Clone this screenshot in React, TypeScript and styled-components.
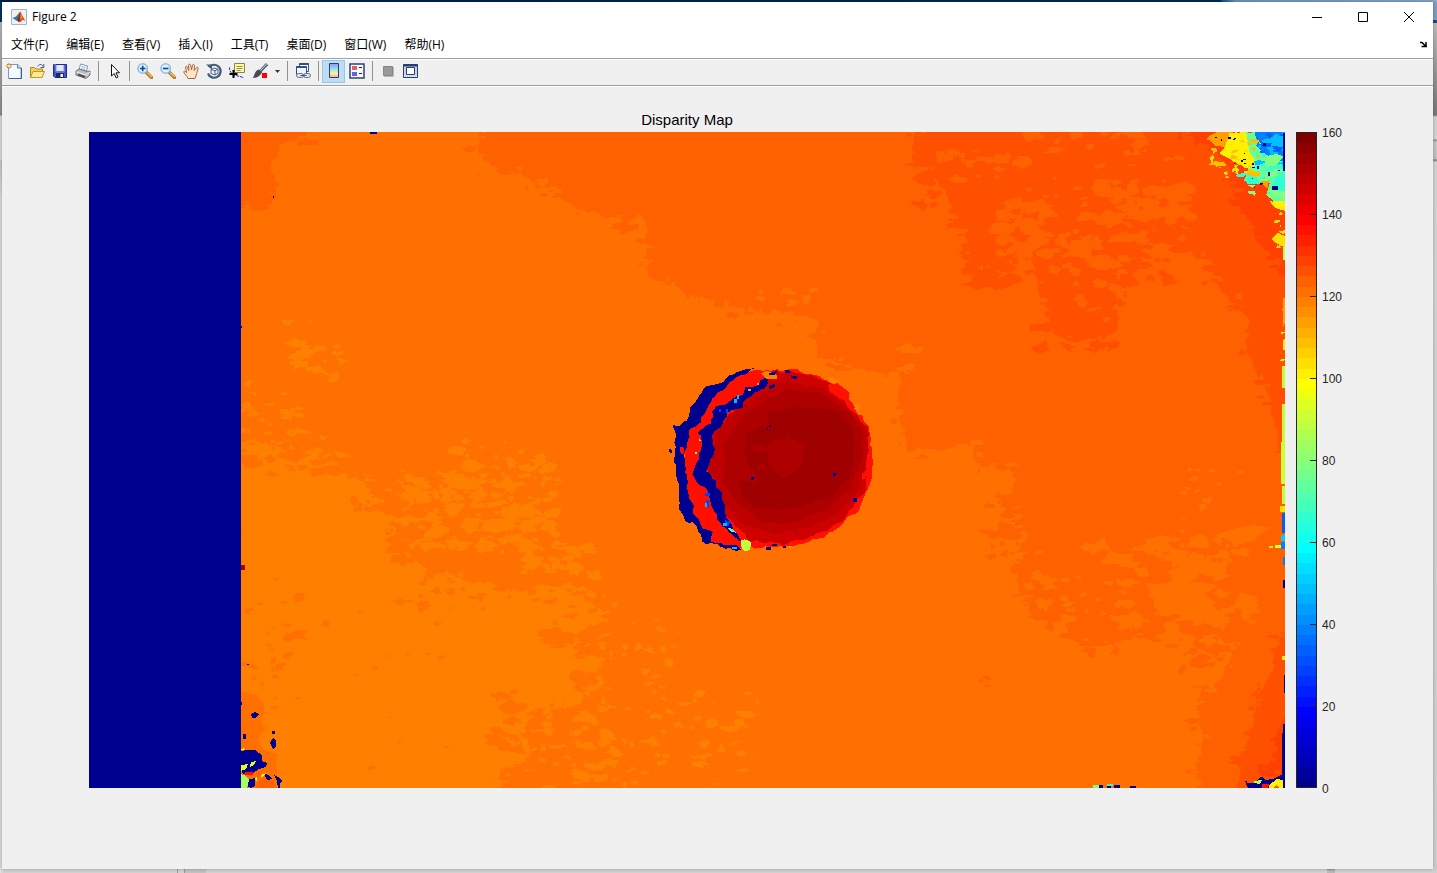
import React from "react";
import styled, { createGlobalStyle } from "styled-components";

const GlobalStyle = createGlobalStyle`
  * { box-sizing: border-box; }
  body { margin: 0; font-family: "Open Sans", "Noto Sans CJK SC", sans-serif; font-size: 12px; color: #000; }
  button { font: inherit; color: inherit; border: 0; background: none; padding: 0; }
`;

const Desktop = styled.div`
  min-height: 100vh;
  display: flex;
  padding: 2px 4px 4px 2px;
  background:
    linear-gradient(#9a9a9a, #9a9a9a) 177px 100% / 1px 4px no-repeat,
    linear-gradient(#9a9a9a, #9a9a9a) 184px 100% / 1px 4px no-repeat,
    linear-gradient(#c4c4c4, #c4c4c4) 184px 100% / 22px 4px no-repeat,
    linear-gradient(#999, #bbb 2px, #bbb 7px, #777 8px) 1327px 100% / 8px 4px no-repeat,
    linear-gradient(90deg, #00203f, #012a55 85%, #0d4f94 85%, #7096bf 86%, #86a6c9) 0 0 / 100% 2px no-repeat,
    linear-gradient(#00355f 0 22px, #b8b8b8 22px, #8f8f8f 114px, #777 115px, #dcdcdc 116px, #dcdcdc 160px, #c8c8c8 161px, #dedede 200px, #dedede) 0 0 / 2px 100% no-repeat,
    linear-gradient(#7d9fc4 0 20px, #0f4c8a 20px 23px, #bdbdbd 23px, #777 115px, #d4d4d4 117px, #d4d4d4 139px, #888 140px, #c8c8c8 142px, #c0c0c0 159px, #778 160px, #d6d6d6 162px, #d0d0d0) 100% 0 / 4px 100% no-repeat,
    #d4d4d4;
`;

const FigureWindow = styled.div`
  flex: 1;
  min-width: 0;
  display: flex;
  flex-direction: column;
  background: #f0f0f0;
  box-shadow: 0 0 4px rgba(0, 0, 0, 0.3);
`;

const TitleBar = styled.header`
  display: flex;
  align-items: center;
  height: 29px;
  padding: 0 1px 0 9px;
  background: #fff;
`;

const WindowTitle = styled.h1`
  flex: 1;
  margin: 0 0 0 5px;
  font-size: 12px;
  font-weight: 400;
  line-height: 16px;
`;

const CaptionButton = styled.button`
  width: 46px;
  height: 28px;
  display: grid;
  place-items: center;
`;

const MenuBar = styled.nav`
  display: flex;
  align-items: center;
  gap: 2px;
  height: 27px;
  padding: 0 6px 0 1px;
  background: #fff;
`;

const MenuButton = styled.button`
  padding: 0 8px;
  line-height: 20px;
  white-space: nowrap;
`;

const DockButton = styled.button`
  display: flex;
  margin-left: auto;
`;

const Toolbar = styled.div`
  display: flex;
  align-items: center;
  height: 29px;
  padding-bottom: 3px;
  border-top: 1px solid #a0a0a0;
  border-bottom: 1px solid #fff;
  box-shadow: inset 0 1px #fff, inset 0 -1px #a0a0a0;
`;

const ToolButton = styled.button<{ $active?: boolean; $narrow?: boolean }>`
  width: ${(p) => (p.$narrow ? 12 : 23)}px;
  height: 23px;
  display: grid;
  place-items: center;
  ${(p) => p.$active && "background: #c0dcf3; box-shadow: inset 0 0 0 1px #90c8f6;"}
`;

const Divider = styled.span`
  width: 1px;
  height: 20px;
  margin: 0 3px 0 4px;
  background: #919191;
`;

const Figure = styled.main`
  flex: 1;
  display: flex;
  align-items: flex-start;
  gap: 11px;
  padding: 23px 91px 81px 87px;
`;

const Axes = styled.figure`
  flex: 1;
  min-width: 0;
  margin: 0;
`;

const AxesTitle = styled.figcaption`
  height: 22px;
  font-family: "Liberation Sans", Arial, sans-serif;
  font-size: 15px;
  line-height: 20px;
  text-align: center;
`;

const MapImage = styled.svg`
  display: block;
  width: 100%;
  height: auto;
`;

const Scale = styled.div`
  align-self: stretch;
  display: flex;
  gap: 5px;
  margin-top: 22px;
`;

const ScaleFrame = styled.div`
  position: relative;
  width: 21px;
`;

const ScaleStrip = styled.svg`
  position: absolute;
  inset: 0;
  width: 100%;
  height: 100%;
`;

const ScaleLabels = styled.div`
  display: flex;
  flex-direction: column;
  justify-content: space-between;
  width: 20px;
  margin: -6px 0 -8px;
  font-family: "Liberation Sans", Arial, sans-serif;
  font-size: 12px;
  line-height: 14px;
  color: #262626;
`;

/* ---------- disparity map drawing ---------- */

type Pt = [number, number];

const random = (seed: number) => () => {
  seed = (seed + 0x6d2b79f5) | 0;
  let t = Math.imul(seed ^ (seed >>> 15), 1 | seed);
  t = (t + Math.imul(t ^ (t >>> 7), 61 | t)) ^ t;
  return ((t ^ (t >>> 14)) >>> 0) / 4294967296;
};

const toPath = (pts: Pt[]) => "M" + pts.map((p) => p.join(" ")).join("L") + "Z";

/* Splits every edge into short pieces and shakes them, for a ragged outline.
   Part of each shift carries over to the next point, which makes lobes and bays. */
function ragged(points: Pt[], amp: number, step: number, seed: number) {
  const r = random(seed);
  const out: Pt[] = [];
  let dx = 0;
  let dy = 0;
  points.forEach(([x, y], i) => {
    const [nx, ny] = points[(i + 1) % points.length];
    const n = Math.max(1, Math.round(Math.hypot(nx - x, ny - y) / step));
    for (let k = 0; k < n; k++) {
      dx = dx * 0.55 + (r() - 0.5) * 2 * amp;
      dy = dy * 0.55 + (r() - 0.5) * 2 * amp;
      out.push([Math.round(x + ((nx - x) * k) / n + dx), Math.round(y + ((ny - y) * k) / n + dy)]);
    }
  });
  return toPath(out);
}

function island(cx: number, cy: number, s: number, r: () => number) {
  const stretch = 1 + r() * 1.5;
  const pts: Pt[] = [];
  for (let a = 0; a < 10; a++) {
    const q = s * (0.35 + r() * 0.9);
    pts.push([
      Math.round((cx + Math.cos((a * Math.PI) / 5) * q * stretch) * 2) / 2,
      Math.round((cy + Math.sin((a * Math.PI) / 5) * q) * 2) / 2,
    ]);
  }
  return toPath(pts);
}

/* Small irregular islands inside a rectangle. */
function islands(x0: number, y0: number, x1: number, y1: number, count: number, size: number, seed: number) {
  const r = random(seed);
  let d = "";
  for (let i = 0; i < count; i++) {
    const cx = x0 + r() * (x1 - x0);
    const cy = y0 + r() * (y1 - y0);
    d += island(cx, cy, size * (0.3 + r() * r()), r);
  }
  return d;
}

/* Islands scattered along an outline, on both of its sides. */
function fringe(points: Pt[], spread: number, step: number, size: number, seed: number) {
  const r = random(seed);
  let d = "";
  points.forEach(([x, y], i) => {
    const [nx, ny] = points[(i + 1) % points.length];
    const n = Math.round(Math.hypot(nx - x, ny - y) / step);
    for (let k = 0; k < n; k++) {
      const t = r();
      const cx = x + (nx - x) * t + (r() - 0.5) * 2 * spread;
      const cy = y + (ny - y) * t + (r() - 0.5) * 2 * spread;
      d += island(cx, cy, size * (0.3 + r() * r()), r);
    }
  });
  return d;
}

const parse = (s: string): Pt[] => s.split(" ").map((p) => p.split(",").map(Number) as Pt);

/* fill, surrounding fill, outline */
const regions: [string, string, string][] = [
  ["#ff8000", "#ff7000", "230,434 273,441 309,439 326,452 347,454 338,468 362,480 384,500 384,519 394,540 394,556 420,562 430,572 467,580 507,592 545,584 586,588 608,596 612,632 602,662 606,705 574,705 538,710 527,727 530,762 503,770 499,800 230,800"],
  ["#ff6000", "#ff7000", "230,110 310,110 308,135 281,146 272,159 275,176 272,205 241,208 230,208"],
  ["#ff6000", "#ff7000", "479,110 480,157 510,172 545,185 562,198 580,208 600,216 625,222 641,216 645,225 648,275 680,290 710,303 740,310 775,317 815,318 818,330 815,358 840,363 873,371 900,376 900,423 907,452 943,450 973,441 977,463 1013,471 1015,489 1000,501 1021,515 1027,536 1013,555 1017,590 1040,627 1067,640 1100,649 1130,638 1167,640 1218,636 1233,653 1220,679 1200,688 1197,701 1202,744 1195,766 1195,800 1310,800 1310,110"],
  ["#ff5000", "#ff6000", "917,110 913,159 930,168 947,198 963,228 973,262 1003,270 1013,254 1033,254 1040,298 1053,332 1073,345 1117,332 1120,285 1150,263 1177,250 1210,263 1223,293 1247,319 1247,354 1263,380 1270,406 1277,432 1283,467 1310,467 1310,110"],
  ["#ff5000", "#ff6000", "1282,632 1273,671 1254,705 1252,736 1236,757 1240,776 1228,810 1310,810 1310,632"],
  ["#ff4000", "#ff5000", "1173,110 1180,137 1208,145 1230,170 1231,190 1253,228 1258,240 1270,255 1283,275 1310,280 1310,110"],
  ["#ff4000", "#ff5000", "1282,720 1276,745 1268,765 1256,773 1272,778 1310,770 1310,720"],
];

const specks: [string, number, number, number, number, number, number][] = [
  ["#ff8000", 365, 478, 560, 550, 90, 8],
  ["#ff8000", 400, 470, 560, 555, 90, 5],
  ["#ff8000", 455, 440, 550, 490, 26, 7],
  ["#ff8000", 280, 320, 310, 326, 3, 4],
  ["#ff8000", 293, 340, 345, 382, 20, 6],
  ["#ff8000", 241, 380, 300, 435, 22, 6],
  ["#ff8000", 520, 545, 595, 575, 30, 6],
  ["#ff8000", 620, 620, 680, 700, 18, 5],
  ["#ff8000", 620, 690, 760, 785, 48, 5],
  ["#ff8000", 540, 715, 615, 785, 52, 7],
  ["#ff7000", 241, 440, 360, 475, 60, 7],
  ["#ff7000", 345, 465, 400, 510, 30, 8],
  ["#ff7000", 390, 530, 475, 562, 34, 7],
  ["#ff7000", 400, 565, 560, 610, 34, 5],
  ["#ff7000", 545, 590, 612, 660, 40, 7],
  ["#ff7000", 580, 660, 608, 710, 22, 8],
  ["#ff7000", 495, 690, 560, 785, 36, 7],
  ["#ff7000", 241, 570, 300, 730, 26, 6],
  ["#ff7000", 300, 600, 480, 780, 14, 4],
  ["#ff6000", 470, 138, 570, 180, 18, 5],
  ["#ff6000", 820, 328, 905, 373, 26, 5],
  ["#ff7000", 730, 290, 815, 325, 18, 7],
  ["#ff7000", 890, 340, 918, 390, 10, 6],
  ["#ff6000", 990, 495, 1025, 580, 20, 7],
  ["#ff7000", 1030, 545, 1150, 630, 42, 8],
  ["#ff7000", 1150, 535, 1245, 562, 22, 9],
  ["#ff7000", 1180, 470, 1245, 545, 14, 6],
  ["#ff7000", 1165, 555, 1222, 645, 44, 11],
  ["#ff7000", 1220, 600, 1255, 628, 12, 9],
  ["#ff6000", 1180, 635, 1230, 680, 18, 6],
  ["#ff5000", 915, 155, 970, 205, 26, 7],
  ["#ff5000", 965, 230, 1010, 285, 30, 8],
  ["#ff6000", 930, 150, 1010, 180, 20, 6],
  ["#ff6000", 1000, 130, 1180, 220, 50, 7],
  ["#ff6000", 1000, 200, 1050, 255, 34, 8],
  ["#ff6000", 1050, 230, 1120, 320, 34, 8],
  ["#ff6000", 1110, 190, 1190, 265, 60, 10],
  ["#ff5000", 1110, 220, 1210, 285, 34, 7],
  ["#ff5000", 1040, 300, 1125, 350, 24, 7],
  ["#ff6000", 1220, 290, 1250, 330, 8, 7],
  ["#ff6000", 970, 675, 990, 690, 4, 6],
];

const corner: [string, string][] = [
  ["#ffa000", "1206,138 1216,132 1232,132 1240,148 1222,147 1212,144"],
  ["#ffef00", "1229,134 1248,132 1258,150 1270,170 1262,174 1246,168 1236,163 1220,153 1226,147"],
  ["#60ff9f", "1247,133 1262,132 1295,145 1295,204 1276,206 1266,192 1270,182 1243,180 1250,168 1258,164 1248,150"],
  ["#30ffcf", "1260,150 1276,155 1290,162 1290,196 1268,193 1276,178 1268,166"],
  ["#ffa000", "1264,175 1270,180 1268,188 1260,182"],
  ["#0080ff", "1254,125 1295,125 1295,166 1276,160 1266,154 1256,146"],
  ["#00bfff", "1262,140 1284,132 1284,148 1272,158"],
  ["#ffef00", "1270,202 1288,200 1288,210 1276,209"],
  ["#ffdf00", "1272,238 1280,234 1288,236 1288,248 1276,244"],
];

const ball: [string, string][] = [
  ["#ff1000", "345,60 470,60 570,90 640,160 688,230 698,330 690,400 650,480 580,550 500,578 430,588 310,590 190,570 150,470 130,350 140,230 190,150 260,90"],
  ["#cf0000", "400,65 500,72 570,106 630,170 685,240 685,330 670,430 620,500 560,540 440,583 330,575 250,480 200,350 220,250 310,150"],
  ["#bf0000", "430,95 560,120 630,180 688,260 680,350 650,430 590,490 520,530 400,555 320,530 260,470 205,350 225,250 310,160"],
  ["#af0000", "430,120 530,125 620,180 662,230 660,350 630,420 560,480 480,510 370,520 300,470 250,400 250,280 320,190"],
  ["#9f0000", "375,180 430,190 480,165 600,190 640,240 645,330 630,380 580,440 450,480 330,470 285,400 340,370 308,310 320,250 390,225"],
  ["#af0000", "390,280 440,260 490,290 480,360 430,385 390,350"],
  ["#00008f", "345,60 290,70 250,95 190,120 150,180 145,215 115,230 100,228 110,260 103,340 115,400 125,480 130,510 160,520 185,560 180,578 200,585 310,600 300,590 215,575 220,545 190,530 165,490 150,430 140,370 140,290 150,240 180,210 215,150 280,90"],
  ["#00008f", "380,75 385,105 340,130 310,160 265,185 240,230 215,260 220,300 200,360 240,420 255,470 270,520 300,555 322,582 295,565 250,535 230,510 215,470 200,420 170,400 160,370 180,330 185,280 175,250 215,220 220,175 270,160 330,110 360,100"],
];

const spots: [string, number, number, number, number][] = [
  ["#00008f", 370, 132, 7, 2], ["#00008f", 273, 196, 1, 2], ["#00008f", 670, 450, 2, 3],
  ["#00008f", 1241, 160, 2, 2], ["#00008f", 1257, 166, 2, 3], ["#00008f", 1272, 186, 6, 4],
  ["#00008f", 1268, 173, 2, 3], ["#00008f", 1263, 143, 3, 3], ["#00008f", 1228, 137, 3, 2],
  ["#00008f", 1283, 133, 2, 38], ["#bfff40", 1283, 246, 2, 14],
  ["#ffa000", 1283, 298, 2, 26], ["#ffef00", 1283, 340, 2, 10], ["#bfff40", 1282, 366, 3, 22],
  ["#bfff40", 1282, 404, 3, 38], ["#cfff30", 1281, 442, 4, 42], ["#bfff40", 1282, 486, 3, 18],
  ["#ffdf00", 1280, 506, 5, 6], ["#0060ff", 1282, 513, 3, 20], ["#00cfff", 1281, 535, 4, 6],
  ["#0080ff", 1281, 542, 4, 7], ["#ffdf00", 1269, 546, 4, 2], ["#dfff20", 1275, 545, 6, 3],
  ["#0080ff", 1283, 557, 2, 8], ["#00008f", 1283, 580, 2, 8], ["#ffef00", 1282, 656, 3, 4],
  ["#00008f", 1284, 675, 1, 18], ["#00008f", 1283, 724, 2, 64],
  ["#80ff80", 1093, 785, 7, 3], ["#00008f", 1099, 785, 4, 3], ["#00008f", 1107, 786, 4, 2],
  ["#20ffdf", 1107, 784, 6, 2], ["#00008f", 1114, 785, 6, 3], ["#00008f", 1130, 786, 6, 2],
  ["#9f0000", 241, 565, 4, 5], ["#00008f", 247, 664, 2, 1], ["#00008f", 241, 702, 1, 3],
  ["#00008f", 241, 326, 1, 2],
];

const DisparityMap = () => (
  <MapImage viewBox="89 132 1196 656" role="img" aria-label="Disparity Map" shapeRendering="crispEdges">
    <rect x="89" y="132" width="1196" height="656" fill="#ff7000" />
    {regions.map(([fill, around, outline], i) => {
      const pts = parse(outline);
      return (
        <g key={i}>
          <path fill={fill} d={ragged(pts, 2, 4, i + 11)} />
          <path fill={around} d={fringe(pts, 6, 14, 5, i + 31)} />
          <path fill={fill} d={fringe(pts, 8, 12, 5, i + 91)} />
        </g>
      );
    })}
    {specks.map(([fill, ...box], i) => (
      <path key={i} fill={fill} d={islands(...box, i + 40)} />
    ))}
    {corner.map(([fill, pts], i) => (
      <path key={i} fill={fill} d={ragged(parse(pts), 1, 3, i + 5)} />
    ))}
    <path fill="#00bfff" d={islands(1256, 134, 1283, 165, 10, 4, 3)} />
    <path fill="#0060ff" d={islands(1258, 134, 1283, 155, 7, 4, 9)} />
    <path fill="#80ff80" d={islands(1250, 155, 1283, 200, 14, 5, 4)} />
    <path fill="#30ffcf" d={islands(1242, 165, 1283, 182, 12, 4, 8)} />
    <path fill="#ffdf00" d={islands(1235, 150, 1255, 175, 9, 4, 6)} />
    <path fill="#ffbf00" d={islands(1208, 135, 1262, 175, 14, 3, 16)} />
    <path fill="#ffdf00" d="M1210 157l2-2 2 2-1 5h-2z M1224 172l3-1 1 3-3 1z M1232 169l4-2 3 2-1 5-2-3-4 1z M1226 176l3 1v1h-4z M1252 195l3-2v3z" />
    <path fill="#ffdf00" d={islands(1276, 212, 1284, 250, 8, 4, 13)} />
    <path fill="#ffef00" d={islands(1282, 300, 1285, 360, 8, 2, 14)} />
    <path fill="#00008f" d={islands(1215, 134, 1283, 188, 22, 1, 7)} />
    <g transform="translate(640 350) scale(.33333)">
      {ball.map(([fill, pts], i) => (
        <path key={i} fill={fill} d={ragged(parse(pts), 5, 11, i + 21)} />
      ))}
      <path fill="#af0000" d={islands(320, 240, 390, 420, 7, 14, 2)} />
      <path fill="#ff8000" d="M362 70l18-8 30 12 2 14-34-2z M564 82l22 4 10 12-26 2z M645 160l16 8-4 14-14-4z" />
      <path fill="#ff1000" d="M120 292l10-2 2 20-10 2z M563 104l30-4 36 28-2 24-32-10-26-18z M665 370l14-6-4 22-10 4z" />
      <path fill="#00008f" d="M388 70l24-8-6 12-18 2z M434 60l18 2-2 8h-16z M452 76l20 4-2 8-16-4z M386 108l22-8-6 14-16 4z M88 297h5v9h-5z M387 226h6v6h-6z M381 234h4v5h-4z M333 380h8v9h-8z M580 370h7v7h-7z M640 444h10v11h-10z M379 592h14v9h-14z M395 582h15v6h-15z M428 588h10v6h-10z M467 539h4v5h-4z" />
      <path fill="#00008f" d="M225 170l30-6 40-30 12 14 2 26-40 8-30 24-20-8z" />
      <path fill="#0040ff" d="M236 178h8v8h-8z M258 178h6v12h-6z M195 430h14v8h-14z M198 450h10v20h-10z M256 510l16 4-6 14-14-2z" />
      <path fill="#00bfff" d="M282 146h8v12h-8z M290 136h8v10h-8z M194 458h6v12h-6z M248 518h12v10h-12z M275 590h16v6h-16z" />
      <path fill="#60ff9f" d="M166 306h5v5h-5z M175 264l8 8-4 2z M262 534l14 2 12 12-16-4z" />
      <path fill="#bfff40" d="M303 572l12-4 18 8-2 22-14 6-12-8z" />
      <path fill="#ffa000" d="M324 117h9v6h-9z M352 100h6v4h-6z M447 588h6v6h-6z" />
    </g>
    <path fill="#ff7000" d={ragged(parse("236,692 256,693 265,704 262,718 258,745 268,752 276,752 278,790 236,790"), 1, 4, 70)} />
    <path fill="#00008f" d="M251 714l4-2 4 2-3 4h-4z M243 734h3v5h-3z M270 743l3-5 3 3v6l-3 2z M272 731h3v3h-3z M241 751l5-1h9l7 5v6l5 2-1 4-7 2-6 4-10 1-3-6z M264 774l5 1 3 4-5 1z M274 775l4 2 4 4-2 3v4h-2l-1-7z M247 780l8-2v8l-4 2-5-3z" />
    <path fill="#dfff20" d="M241 765l7-1-2 5-5 2z M251 762l5-1-2 4-4 2z M261 775l5-2-4 5z M241 749l3-1 1 2h-4z" />
    <path fill="#9fff60" d="M241 774l5 2 3 4-2 8h-6z M254 779l4-4-1 6z" />
    <path fill="#ff1000" d="M245 772h8v3h-8z" />
    <path fill="#ff6000" d="M256 772l4-1 1 5-4 2z M258 781l5-2 10 2 3 7h-20z" />
    {spots.map(([fill, x, y, w, h], i) => (
      <rect key={i} fill={fill} x={x} y={y} width={w} height={h} />
    ))}
    <path fill="#00008f" d="M1245 781h2v2h10v-3l3-3h3l2 3 8-1 8-4h4v13h-37z M1282 733l3-3v55h-3z" />
    <path fill="#afff50" d="M1254 781l8-1-2 4-6-1z" />
    <path fill="#ff1000" d="M1262 784h7l-1 4h-6z" />
    <path fill="#ffef00" d="M1269 785l4-3 4-3 6 1v8h-14z" />
    <path fill="#ff5000" d="M1274 787l2-2 3 3h-5z" />
    <rect x="89" y="132" width="152" height="656" fill="#00008f" />
  </MapImage>
);

/* 64-level jet colour map, from the lowest value to the highest. */
const jet = Array.from({ length: 64 }, (_, i) => {
  const channel = (shift: number) => {
    const v = 1.5 - Math.abs((i + 1) / 16 - shift);
    return Math.round(Math.max(0, Math.min(1, v)) * 255);
  };
  return `rgb(${channel(3)},${channel(2)},${channel(1)})`;
});

const Colorbar = () => (
  <Scale>
    <ScaleFrame>
      <ScaleStrip viewBox="0 0 21 656" preserveAspectRatio="none" shapeRendering="crispEdges" aria-hidden="true">
        {jet.map((fill, i) => (
          <rect key={i} x="0" y={656 - (i + 1) * 10.25} width="21" height="11" fill={fill} />
        ))}
        <path d="M.5 .5H20.5V655.5H.5Z" fill="none" stroke="#262626" />
        {[1, 2, 3, 4, 5, 6, 7].map((n) => (
          <path key={n} d={`M14 ${n * 82 + 0.5}H21`} stroke="#262626" />
        ))}
      </ScaleStrip>
    </ScaleFrame>
    <ScaleLabels>
      {[160, 140, 120, 100, 80, 60, 40, 20, 0].map((v) => (
        <span key={v}>{v}</span>
      ))}
    </ScaleLabels>
  </Scale>
);

/* ---------- toolbar icons ---------- */

const Icon = ({ children, size = 16 }: { children: React.ReactNode; size?: number }) => (
  <svg width={size} height={size} viewBox={`0 0 ${size} ${size}`} fill="none" aria-hidden="true">
    {children}
  </svg>
);

const NewIcon = () => (
  <Icon>
    <path d="M2.5 1.5H12l3 3v11H2.5z" fill="#f4faff" stroke="#7d9cc4" />
    <path d="M15.5 5v10.500H3" stroke="#3f6090" />
    <path d="M11.500 1.500v3.500h3.500" fill="#c9dcf2" stroke="#5f80b0" />
    <path d="M3 0v6M0 3h6M1 1l4 4M5 1L1 5" stroke="#e07030" />
    <circle cx="3" cy="3" r="1.300" fill="#ffe9a0" />
  </Icon>
);
const OpenIcon = () => (
  <Icon>
    <path d="M1.500 14V4.500h4l1.500 1.500h6.500V14z" fill="#f5cf62" stroke="#b98612" />
    <path d="M1.500 14.500L4 8.500h11.500L13 14.500z" fill="#ffec9a" stroke="#c4921d" />
    <path d="M8.500 3.500c2-3 5-2.500 6 .5M14.800 1v3.500H11.500" stroke="#46648e" />
  </Icon>
);
const SaveIcon = () => (
  <Icon>
    <path d="M1.500 1.500h13v13H3l-1.500-1.500z" fill="#4355c5" stroke="#202c86" />
    <path d="M4 2h8v6H4z" fill="#dfe9ff" />
    <path d="M2 2h2v7h8V2" stroke="#7f92ef" />
    <path d="M4 10h8v5H4z" fill="#1e2864" />
    <path d="M8.500 11h2.500v3H8.500z" fill="#f5f7ff" />
  </Icon>
);
const PrintIcon = () => (
  <Icon>
    <path d="M4 7L5.500 1l7 2-1 5z" fill="#fff" stroke="#8795a8" />
    <path d="M6.500 3.500l4 1M6 5.500l4 1" stroke="#8fb0df" />
    <path d="M1 8l3-2 8 2.500 3-.5v4l-4 3.500L1 12z" fill="#bcbcc2" stroke="#74747c" />
    <path d="M1.500 9l9.500 3 4-3" stroke="#f0f0f0" />
    <path d="M3 11.500l7 2.500" stroke="#4b4b50" strokeWidth="2" />
  </Icon>
);
const PointerIcon = () => (
  <Icon>
    <path d="M5.500 1.500v11.500l2.700-2.500 2 4.500 1.800-1-2-4.200h3.500z" fill="#fff" stroke="#111" />
  </Icon>
);
const Zoomer = ({ plus }: { plus?: boolean }) => (
  <Icon>
    <path d="M9.500 9.500l5 5" stroke="#b37b2c" strokeWidth="3.500" strokeLinecap="round" />
    <path d="M10 9.500l5 4.500" stroke="#f0bd63" strokeWidth="1.500" />
    <circle cx="5.700" cy="5.500" r="4.700" fill="#d9f3ff" stroke="#8fb8de" strokeWidth="1.500" />
    <path d={plus ? "M3 5.500h5.500M5.700 2.800v5.500" : "M3 5.500h5.500"} stroke="#173f96" strokeWidth="1.600" />
  </Icon>
);
const PanIcon = () => (
  <Icon>
    <path d="M5 15.500C4.500 13 1 11 .7 8.700c.8-1.200 2 0 3 1L2.500 4c.5-1.500 1.700-.7 2.200 1L5.800 7.500 5.500 2c.7-1.500 2-1 2.200.5L8.500 7 9.500 2c.8-1.300 2-.5 1.900.8L11.200 7.500 13.500 4.500c1.200-.8 2 .1 1.500 1.500-1 2.500-1.500 6-3 9.500z" fill="#ffe6cb" stroke="#a9683a" />
  </Icon>
);
const RotateIcon = () => (
  <Icon>
    <path d="M3 4.200A6.500 6.500 0 1 1 2 10.500" stroke="#435878" strokeWidth="2.200" />
    <path d="M0 1.500h6v5z" fill="#435878" />
    <path d="M5 6.500l3-1.500 4 1.200v4l-3 1.800-4-1.500zM5 6.500l4 1.300 3-1.600M9 7.800V12" fill="#eef4ff" stroke="#4b6387" />
  </Icon>
);
const DataTipIcon = () => (
  <Icon>
    <path d="M5.500.5h10v9h-10z" fill="#fff8a8" stroke="#8c8540" />
    <path d="M7.500 3.500h6M7.500 5.500h6M7.500 7.500h4" stroke="#9a9350" />
    <path d="M0 4c1 4 2 7 5 8s6 1 10 3" stroke="#2222ee" strokeDasharray="3 1" />
    <path d="M4.500 7v8M.5 11h8" stroke="#000" strokeWidth="2" />
  </Icon>
);
const BrushIcon = () => (
  <Icon>
    <path d="M15 1L8 8.500" stroke="#54627c" strokeWidth="3" />
    <path d="M15 .5L8 8" stroke="#c6d6ef" />
    <path d="M7 6.500l3 2.500c-1 3-4 6-9.500 6C3 13 2 8 7 6.500z" fill="#4c4a4d" />
    <path d="M10 10h5v5h-5z" fill="#f00" />
  </Icon>
);
const LinkIcon = () => (
  <Icon>
    <path d="M4.500.5h9v8h-9z" fill="#fff" stroke="#2f4f86" />
    <path d="M1.500 3.500h10v8h-10z" fill="#eef5ff" stroke="#2f4f86" />
    <path d="M1.500 4h10M4.500 1h9" stroke="#2f4f86" strokeWidth="2" />
    <rect x="1.500" y="10.500" width="7" height="4" rx="2" fill="#d9e2ec" stroke="#60748c" />
    <rect x="8.500" y="10.500" width="7" height="4" rx="2" fill="#d9e2ec" stroke="#60748c" />
    <path d="M5.500 12.500h6" stroke="#3e546e" />
  </Icon>
);
const ColorbarIcon = () => (
  <Icon>
    <defs>
      <linearGradient id="bar" x2="0" y2="1">
        <stop stopColor="#9e8ff0" />
        <stop offset=".35" stopColor="#85dcf5" />
        <stop offset=".7" stopColor="#fff3a0" />
        <stop offset="1" stopColor="#f7a5a0" />
      </linearGradient>
    </defs>
    <path d="M3.500.5h9v14h-9z" fill="url(#bar)" stroke="#28406c" />
  </Icon>
);
const LegendIcon = () => (
  <Icon>
    <path d="M1 1h14v14H1z" fill="#f7fafe" stroke="#2f4373" strokeWidth="1.500" />
    <path d="M3 3h5v4H3z" fill="#e85d5d" />
    <path d="M3 9h5v4H3z" fill="#6262e8" />
    <path d="M10 4.500h3M10 10.500h3" stroke="#222" />
  </Icon>
);
const HidePlotIcon = () => (
  <Icon>
    <path d="M3.500 3.500h9v9h-9z" fill="#999" stroke="#868686" />
    <path d="M4 13.500h9.500V4" stroke="#b9b9b9" />
  </Icon>
);
const ShowPlotIcon = () => (
  <Icon>
    <path d="M.500 1.500h14v13H.500z" fill="#c9d3e3" stroke="#26406f" />
    <path d="M0 2.500h15" stroke="#26406f" strokeWidth="2" />
    <path d="M3.500 4.500h8v7h-8z" fill="#fff" stroke="#26406f" />
    <path d="M1 13h13" stroke="#fff" strokeDasharray="1 1" />
  </Icon>
);

const MatlabLogo = () => (
  <Icon>
    <path d="M.5.5h15v15H.5z" fill="#eef1f4" stroke="#a9b4bf" />
    <path d="M1.500 9L5 7.500l3-3.500 1 3-3 5-1.500-1z" fill="#2f76ae" />
    <path d="M8 4c1.500-2.500 2-1 2.700 1.500L14.500 12c-2-1.500-3-1-4 0-1 1.500-2 1.500-3 1L6 11c2-2 1.500-5 2-7z" fill="#d9541e" />
    <path d="M9 3.500l.8 7L7.500 13 6 11c2-2 2-5 3-7.500z" fill="#8c2414" />
    <path d="M10 3.500l1 5.500-2 2z" fill="#f5a13a" />
  </Icon>
);

const tools: ([string, React.ReactNode] | null)[] = [
  ["新建图窗", <NewIcon />], ["打开文件", <OpenIcon />], ["保存图窗", <SaveIcon />], ["打印图窗", <PrintIcon />], null,
  ["编辑绘图", <PointerIcon />], null,
  ["放大", <Zoomer plus />], ["缩小", <Zoomer />], ["平移", <PanIcon />], ["三维旋转", <RotateIcon />],
  ["数据游标", <DataTipIcon />], ["刷亮数据", <BrushIcon />],
  ["刷亮选项", <Icon size={5}><path d="M0 1h5L2.500 4z" fill="#333" /></Icon>], null,
  ["链接绘图", <LinkIcon />], null,
  ["插入颜色栏", <ColorbarIcon />], ["插入图例", <LegendIcon />], null,
  ["隐藏绘图工具", <HidePlotIcon />], ["显示绘图工具", <ShowPlotIcon />],
];

const menus = ["文件(F)", "编辑(E)", "查看(V)", "插入(I)", "工具(T)", "桌面(D)", "窗口(W)", "帮助(H)"];

const captions: [string, string][] = [
  ["最小化", "M0 5.5h10"],
  ["最大化", "M.5 .5h9v9h-9z"],
  ["关闭", "M0 0l10 10M10 0L0 10"],
];

export default function App() {
  return (
    <>
      <GlobalStyle />
      <Desktop>
        <FigureWindow>
          <TitleBar>
            <MatlabLogo />
            <WindowTitle>Figure 2</WindowTitle>
            {captions.map(([name, d]) => (
              <CaptionButton key={name} aria-label={name}>
                <Icon size={10}>
                  <path d={d} stroke="#000" />
                </Icon>
              </CaptionButton>
            ))}
          </TitleBar>
          <MenuBar>
            {menus.map((m) => (
              <MenuButton key={m}>{m}</MenuButton>
            ))}
            <DockButton aria-label="停靠图窗">
              <Icon size={7}>
                <path d="M0 1.500h2L5 4.500M6 1v5M1.500 5.500H7" stroke="#000" strokeWidth="1.500" />
              </Icon>
            </DockButton>
          </MenuBar>
          <Toolbar role="toolbar" aria-label="图窗工具栏">
            {tools.map((t, i) =>
              t ? (
                <ToolButton key={i} aria-label={t[0]} $active={t[0] === "插入颜色栏"} $narrow={t[0] === "刷亮选项"}>
                  {t[1]}
                </ToolButton>
              ) : (
                <Divider key={i} />
              )
            )}
          </Toolbar>
          <Figure>
            <Axes>
              <AxesTitle>Disparity Map</AxesTitle>
              <DisparityMap />
            </Axes>
            <Colorbar />
          </Figure>
        </FigureWindow>
      </Desktop>
    </>
  );
}
